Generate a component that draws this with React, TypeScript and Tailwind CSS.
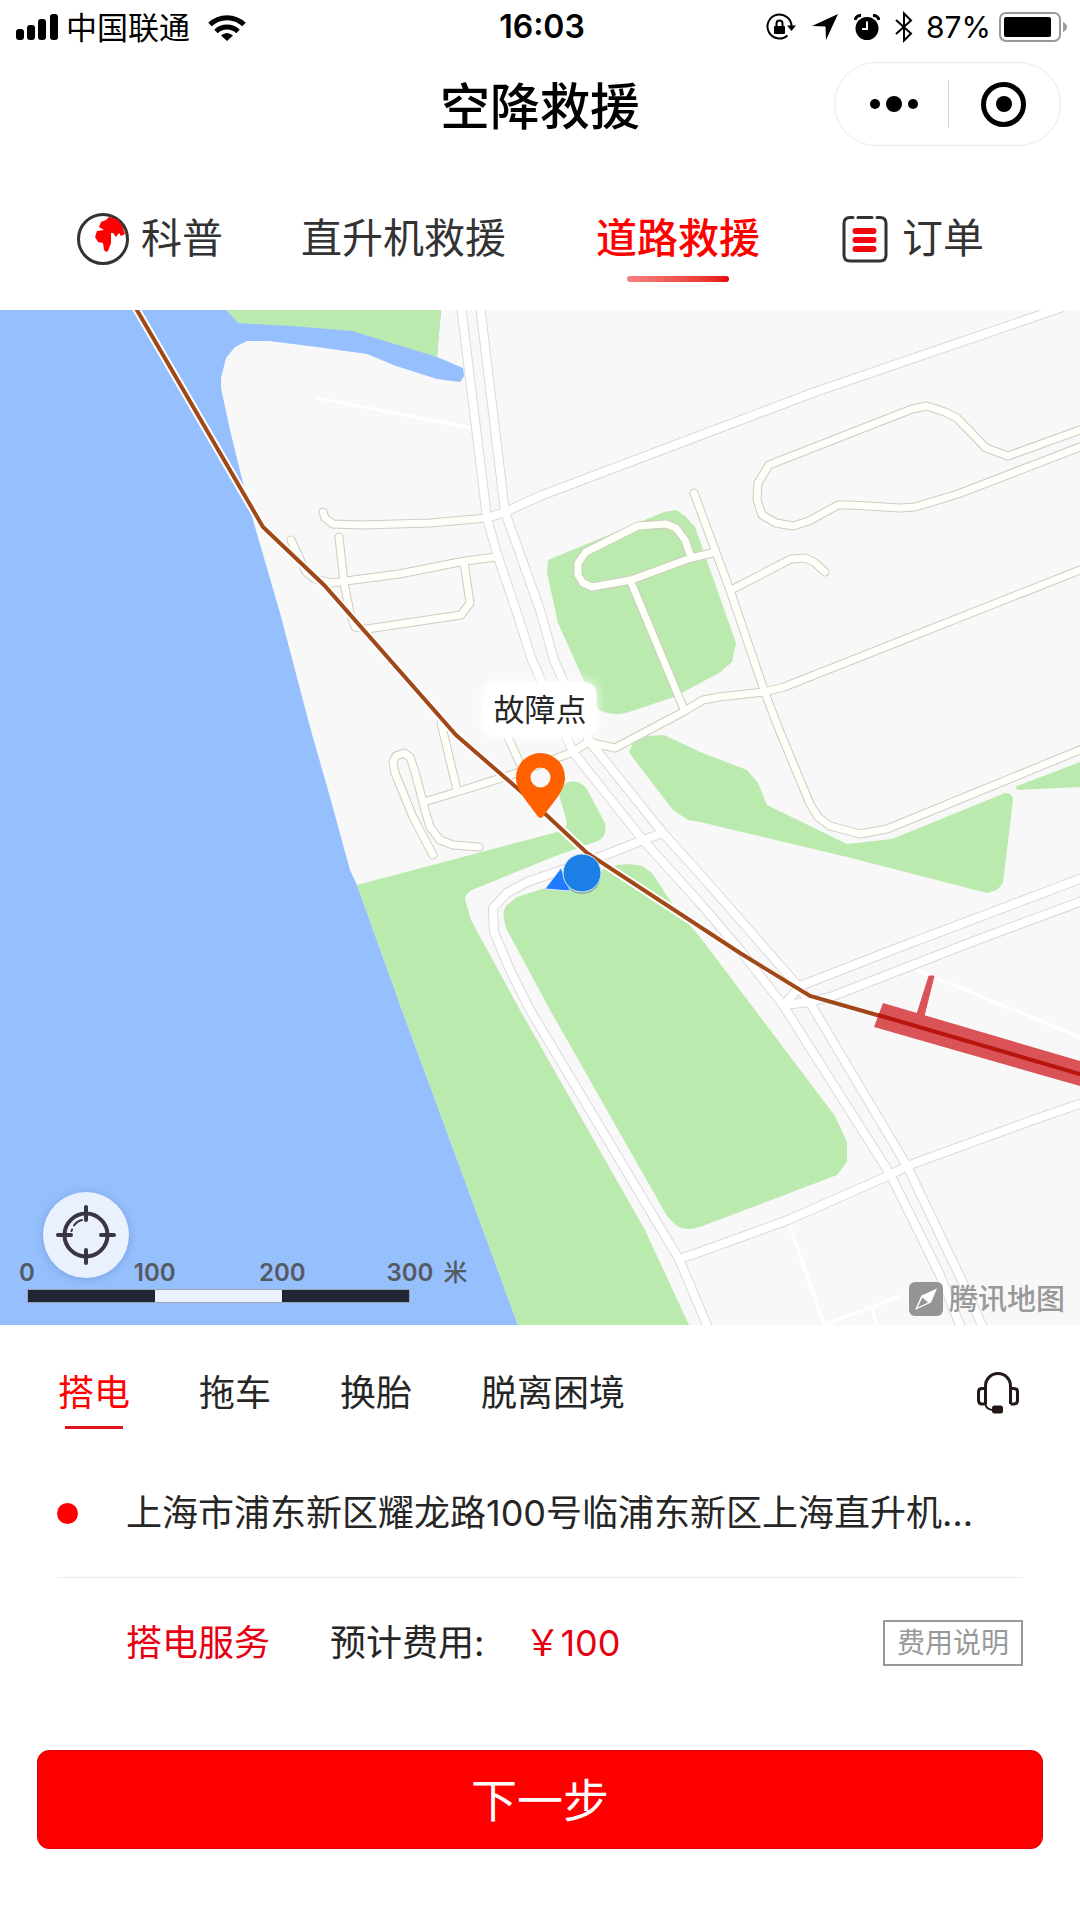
import { useState } from 'react'
import clsx from 'clsx'

const services = ['搭电', '拖车', '换胎', '脱离困境']

const parks = [
  'M357 885 557 832 Q567 829 567 822L558 792Q567 777 580 783 587 787 590 795L605 823Q608 836 598 841L553 857 472 890Q465 894 465 899L471 920 520 1010 645 1230 689 1325H518L461 1170 402 1010Z',
  'M617 865 630 864 642 866 652 873 673 905 700 937 835 1116 847 1142V1162L837 1175 700 1227Q684 1232 676 1225L667 1216 550 1010 507 930Q500 912 507 905L517 897Z',
  'M548 560 547 573 558 623 585 683 599 710Q612 716 626 713L674 697 719 673 732 662 736 643 695 527 685 516 676 510 664 512Z',
  'M629 752 633 743 647 736 664 735 700 752 747 770 758 783 767 805 847 844 892 839 1005 793Q1013 793 1013 800L1003 883 997 890 987 893 847 857 700 822 688 820 673 810 633 758Z',
  'M1015 787 1018 790 1080 787V762Z',
  'M226 310 238 323 292 326 352 331 437 357 441 310Z',
]

const lanes = [
  'M323 512 325 518 333 524 362 525 430 523 487 518',
  'M291 540 306 572 315 579 331 583 399 574 465 561 496 557',
  'M339 537 344 583 350 613 355 627 367 629 461 615 470 603 464 562',
  'M433 855 413 817 395 773 393 762 396 756 404 753 410 757 415 772 425 810 430 827 440 840 453 845 479 847',
  'M427 801 457 792 517 773 573 752 588 742 615 748 683 712 703 700 719 697 764 692 784 687 1080 570',
  'M441 723 457 790',
  'M507 735 522 768',
  'M1080 430 1008 456 986 448 957 418 945 412 927 406 912 409 769 465 758 483 757 500 762 515 776 523 793 526 809 521 838 505 850 505 900 508 915 507 958 494 1080 447',
  'M694 493 731 593 764 690 778 727 810 804 818 817 830 826 860 834 887 829 1080 750',
  'M731 590 791 559 805 558 814 562 825 572',
  'M712 553 691 558 631 580 592 587 583 583 578 575V563L586 552 638 526 666 524 676 528 685 540 691 557',
  'M631 582 683 707',
]

const streets = [
  'M461 305 487 518 498 557 517 613 532 660 573 752 643 840 700 903 740 950 783 1005 890 1174 940 1275 962 1330',
  'M480 305 505 512 540 610 554 660 590 742 663 833 700 874 798 986 810 1003 907 1166 963 1283 984 1330',
  'M487 518 505 512 540 496 815 392 1063 307',
  'M663 833 643 840 600 857 527 882 507 893 493 908 494 932 510 970 530 1010 679 1259 709 1330',
  'M679 1259 700 1252 788 1220 890 1175 907 1166 1033 1120 1085 1102',
  'M784 1005 800 986 900 947 1085 877',
  'M784 1005 810 1002 833 996 977 940 1085 900',
]

const alleys = ['M317 398 472 428', 'M789 1223 824 1325 900 1296', 'M872 1308 877 1327', 'M912 968 1080 1037']

const route = 'M134 305 263 527 324 585 456 735 525 795 587 853 740 953 810 996 877 1015 1090 1077'

function MapCanvas() {
  return (
    <svg viewBox="0 310 1080 1015" className="block w-full bg-[#f8f8f8]" aria-hidden="true">
      <path
        fill="#96bffd"
        d="M0 310H441L437 357 463 368 464 376 460 382 437 379 396 366 367 354 317 347 269 341 247 341 235 347 226 358 221 378 221 388 230 430 241 475 253 520 280 613 310 727 330 797 350 870 357 885 402 1010 461 1170 518 1325H0Z"
      />
      {parks.map((d) => (
        <path key={d} d={d} fill="#bbeaae" />
      ))}
      <g fill="none" stroke="#fff" strokeWidth="3">
        {alleys.map((d) => (
          <path key={d} d={d} />
        ))}
      </g>
      {/* casings first, so that crossings stay open */}
      <g fill="none" stroke="#cfcbc0" strokeWidth="9" strokeLinecap="round" strokeLinejoin="round">
        {lanes.map((d) => (
          <path key={d} d={d} />
        ))}
      </g>
      <g fill="none" stroke="#dadada" strokeWidth="10" strokeLinejoin="round">
        {streets.map((d) => (
          <path key={d} d={d} />
        ))}
      </g>
      <g fill="none" stroke="#fffffa" strokeWidth="7" strokeLinecap="round" strokeLinejoin="round">
        {lanes.map((d) => (
          <path key={d} d={d} />
        ))}
      </g>
      <g fill="none" stroke="#fff" strokeWidth="8" strokeLinejoin="round">
        {streets.map((d) => (
          <path key={d} d={d} />
        ))}
      </g>
      <path d="M134 305 263 527 324 585 456 735 525 795 587 853 740 953" fill="none" stroke="#fff" strokeWidth="8" />
      <path d={route} fill="none" stroke="#a04818" strokeWidth="4" />
      <path d="M883 1003 1080 1061V1086L874 1027Z" fill="#da5357" />
      <path d="M929 976H934L924 1016 917 1014Z" fill="#da5357" stroke="#da5357" />
      <path d="M878 1015 1090 1077" stroke="#b9150f" strokeWidth="4" />
      <path d="M545 889 561 868 570 891Z" fill="#1f7cff" stroke="#dcebfb" />
      <circle cx="582" cy="875" r="19" fill="#3f6f9c" opacity=".5" />
      <circle cx="582" cy="873" r="19" fill="#1c7fe6" stroke="#d9ecf5" strokeWidth="1" />
    </svg>
  )
}

function StatusBar() {
  return (
    <div className="grid h-[54px] grid-cols-[1fr_auto_1fr] items-center pr-3 pl-4 text-black">
      <div className="flex items-center">
        <svg className="h-[26px] w-[42px]" viewBox="0 0 42 26">
          <rect x="0" y="15" width="8" height="11" rx="3" />
          <rect x="11" y="11" width="8" height="15" rx="3" />
          <rect x="22" y="5" width="8" height="21" rx="3" />
          <rect x="34" y="0" width="8" height="26" rx="3" />
        </svg>
        <span className="ml-2 text-[31px] leading-none">中国联通</span>
        <svg className="ml-[18px] h-[27px] w-[38px]" viewBox="0 0 38 27" fill="none" stroke="#000" strokeWidth="5">
          <path d="M2 10.5A24.500 24.500 0 0 1 36 10.500" />
          <path d="M8 17.500A16 16 0 0 1 30 17.500" />
          <path d="M19 27 13 21.500Q19 16.500 25 21.500Z" fill="#000" stroke="none" />
        </svg>
      </div>
      <time className="text-[32px] leading-none font-semibold">16:03</time>
      <div className="flex items-center justify-end">
        <svg className="h-[28px] w-[30px]" viewBox="0 0 30 28" fill="none" stroke="#000" strokeWidth="2">
          <path d="M25.500 14A12 12 0 1 0 21.500 22.500" />
          <path d="M21 12.500H30L25.500 18Z" fill="#000" stroke="none" />
          <rect x="8" y="13" width="11" height="8" rx="1" fill="#000" stroke="none" />
          <path d="M10.500 13V10.500A3 3 0 0 1 16.500 10.500V13" />
        </svg>
        <svg className="ml-4 h-[26px] w-[26px]" viewBox="0 0 26 26">
          <path d="M26 0 14 26 13.500 12.500 0 12Z" />
        </svg>
        <svg className="ml-4 h-[27px] w-[26px]" viewBox="0 0 26 27">
          <circle cx="13" cy="14.500" r="11.500" />
          <path d="M1 6A6 6 0 0 1 7 1.500M19 1.500A6 6 0 0 1 25 6" fill="none" stroke="#000" strokeWidth="3" />
          <path d="M13 7.500V15H8" fill="none" stroke="#fff" strokeWidth="2" />
        </svg>
        <svg className="ml-3.5 h-[32px] w-[20px]" viewBox="0 0 20 32" fill="none" stroke="#000" strokeWidth="2">
          <path d="M2 9 17 22.500 10 29.500V2.500L17 9.500 2 23" />
        </svg>
        <span className="ml-3 text-[30px] leading-none">87%</span>
        <svg className="ml-2 h-[30px] w-[69px]" viewBox="0 0 69 30">
          <rect x="1" y="1" width="60" height="28" rx="6" fill="none" stroke="#999" strokeWidth="2" />
          <rect x="5" y="5" width="47" height="20" rx="2" />
          <path d="M64 10Q68 12 68 15T64 20Z" fill="#999" />
        </svg>
      </div>
    </div>
  )
}

function GlobeIcon() {
  return (
    <svg className="size-[52px]" viewBox="0 0 52 52">
      <circle cx="26" cy="26" r="24.500" fill="none" stroke="#333" strokeWidth="3" />
      <path
        fill="#f00"
        d="M32 4 40 6 45 12 48 21 44 23 42 20 39 24 36 20 34 20V30L31 38 29 39 27 37 26 30 21 29 18 24 20 18 27 17 22 14 24 9 29 7Z"
      />
    </svg>
  )
}

function OrderIcon() {
  return (
    <svg className="h-[48px] w-[46px]" viewBox="0 0 46 48" fill="none" strokeLinecap="round">
      <path d="M11 2.500H8Q2 2.500 2 8.500V40Q2 46 8 46H38Q44 46 44 40V8.500Q44 2.500 38 2.500H35" stroke="#333" strokeWidth="3" />
      <path d="M16 2.500H30" stroke="#333" strokeWidth="3" />
      <path d="M13.500 16H31.500M13.500 25H31.500M13.500 34H31.500" stroke="#f2080f" strokeWidth="6" />
    </svg>
  )
}

export default function App() {
  const [service, setService] = useState(services[0])

  return (
    <div className="min-h-screen bg-white font-['Inter','Noto_Sans_CJK_SC',sans-serif] text-[#262626]">
      <header>
        <StatusBar />
        <div className="relative flex h-[106px] items-center justify-center">
          <h1 className="text-[50px] leading-none font-medium text-black">空降救援</h1>
          <div className="absolute top-2 right-[19px] flex h-[84px] w-[227px] items-center rounded-full border border-[#ebebeb]">
            <button aria-label="更多" className="flex flex-1 items-center justify-center gap-1.5 pl-1">
              <span className="size-2.5 rounded-full bg-black" />
              <span className="size-4 rounded-full bg-black" />
              <span className="size-2.5 rounded-full bg-black" />
            </button>
            <span className="h-12 w-px bg-[#d5d5d5]" />
            <button aria-label="关闭" className="flex flex-1 items-center justify-center pr-0.5">
              <span className="flex size-[45px] items-center justify-center rounded-full border-[5px] border-black">
                <span className="size-4 rounded-full bg-black" />
              </span>
            </button>
          </div>
        </div>
        <nav className="flex h-[150px] items-center pt-[7px] pl-[77px] text-[41px] leading-none text-[#333]">
          <button className="flex items-center gap-3">
            <GlobeIcon />
            科普
          </button>
          <button className="ml-[78px]">直升机救援</button>
          <button className="relative ml-[90px] font-medium text-[#f00]">
            道路救援
            <span className="absolute -bottom-[23px] left-1/2 h-1.5 w-[102px] -translate-x-1/2 rounded-full bg-linear-to-r from-[#f58080] to-[#e60000]" />
          </button>
          <button className="ml-[82px] flex items-center gap-[14px]">
            <OrderIcon />
            订单
          </button>
        </nav>
      </header>

      <section className="relative" aria-label="地图">
        <MapCanvas />
        <div className="absolute bottom-1/2 left-1/2 flex -translate-x-1/2 flex-col items-center">
          <span className="rounded-xl bg-white px-2.5 py-3 text-[31px] leading-none whitespace-nowrap shadow-[0_0_12px_#fff]">
            故障点
          </span>
          <svg className="mt-4 h-[65px] w-[50px]" viewBox="0 0 50 65">
            <path
              fillRule="evenodd"
              fill="#ff6000"
              d="M25 0A24.500 24.500 0 0 1 49.500 25C49.500 38 36 51 28 63Q25 67 22 63C14 51 .5 38 .5 25A24.500 24.500 0 0 1 25 0ZM25 14.500A10 10 0 1 0 25 34.500 10 10 0 0 0 25 14.500Z"
            />
          </svg>
        </div>
        <button
          aria-label="定位"
          className="absolute bottom-[47px] left-[43px] flex size-[86px] items-center justify-center rounded-full bg-[#e9f1fe] shadow-[0_1px_8px_rgba(60,100,170,0.35)]"
        >
          <svg className="size-[60px]" viewBox="0 0 60 60" fill="none" stroke="#3a3544" strokeLinecap="round">
            <circle cx="30" cy="30" r="21.500" strokeWidth="4" />
            <path d="M30 2V15M30 45V58M2 30H15M45 30H58" strokeWidth="4" />
            <path d="M16 24.500 15.500 26M18 20.500Q21 16 26 15" strokeWidth="2" />
          </svg>
        </button>
        <div className="absolute bottom-[22px] left-[27px] w-[383px] text-2xl leading-none font-semibold text-[#555a62]">
          <div className="mb-1 flex justify-between">
            <span className="flex w-0 justify-center">0</span>
            <span className="flex w-0 justify-center">100</span>
            <span className="flex w-0 justify-center">200</span>
            <span className="flex w-0 justify-center">
              <span className="relative">
                300
                <span className="absolute left-full pl-2.5 font-medium">米</span>
              </span>
            </span>
          </div>
          <div className="flex h-[14px] border border-[#9ba3b0] bg-[#e9f1fe]">
            <span className="flex-1 bg-[#1f2533]" />
            <span className="flex-1" />
            <span className="flex-1 bg-[#1f2533]" />
          </div>
        </div>
        <div className="absolute right-[15px] bottom-[9px] flex items-center gap-1.5 text-[29px] leading-none font-medium text-[#999]">
          <svg className="size-[34px]" viewBox="0 0 34 34">
            <rect width="34" height="34" rx="6" fill="#959595" />
            <path d="M28 6.500 22 20.500 6 28 12.500 13.500Z" fill="#fff" />
            <path d="M13.500 15.500 19 20.500 8.500 25.500Z" fill="#959595" />
          </svg>
          腾讯地图
        </div>
      </section>

      <main className="px-[57px] text-[36px]">
        <div className="flex h-[136px] items-center justify-between">
          <div className="flex gap-[69px] pl-px" role="tablist">
            {services.map((name) => (
              <button
                key={name}
                role="tab"
                aria-selected={name === service}
                onClick={() => setService(name)}
                className={clsx('relative leading-none', name === service && 'text-[#f00]')}
              >
                {name}
                {name === service && (
                  <span className="absolute -bottom-[18px] left-1/2 h-[3px] w-[58px] -translate-x-1/2 bg-[#e0141c]" />
                )}
              </button>
            ))}
          </div>
          <button aria-label="客服" className="mr-1">
            <svg className="h-[42px] w-[42px]" viewBox="0 0 42 42" fill="none" stroke="#231815" strokeWidth="3">
              <path d="M8.500 32V14A12.500 12.500 0 0 1 33.500 14V32" />
              <path d="M8.500 16.500H5Q1.500 16.500 1.500 20V28Q1.500 32 5 32H8.500M33.500 16.500H37Q40.500 16.500 40.500 20V28Q40.500 32 37 32H33.500" />
              <path d="M8.500 32Q9 38 17 38" strokeWidth="2" />
              <rect x="16.500" y="35" width="8" height="5" rx="1" fill="#231815" />
            </svg>
          </button>
        </div>
        <div className="flex h-[117px] items-center border-b border-[#ececec] pb-3">
          <span className="size-[21px] shrink-0 rounded-full bg-[#f00]" />
          <p className="ml-12 truncate leading-[52px]">上海市浦东新区耀龙路100号临浦东新区上海直升机…</p>
        </div>
        <div className="flex h-[130px] items-center pl-[69px] leading-none">
          <span className="text-[#e60012]">搭电服务</span>
          <span className="ml-[60px]">预计费用:</span>
          <span className="ml-10 text-[#e60012]">￥100</span>
          <button className="ml-auto border-2 border-[#999] px-3 py-[7px] text-[28px] leading-none text-[#999]">
            费用说明
          </button>
        </div>
      </main>

      <div className="px-[37px] pt-[42px] pb-[70px]">
        <button className="h-[99px] w-full rounded-xl border border-[#dd0008] bg-[#f00] text-[46px] leading-none text-white">
          下一步
        </button>
      </div>
    </div>
  )
}
